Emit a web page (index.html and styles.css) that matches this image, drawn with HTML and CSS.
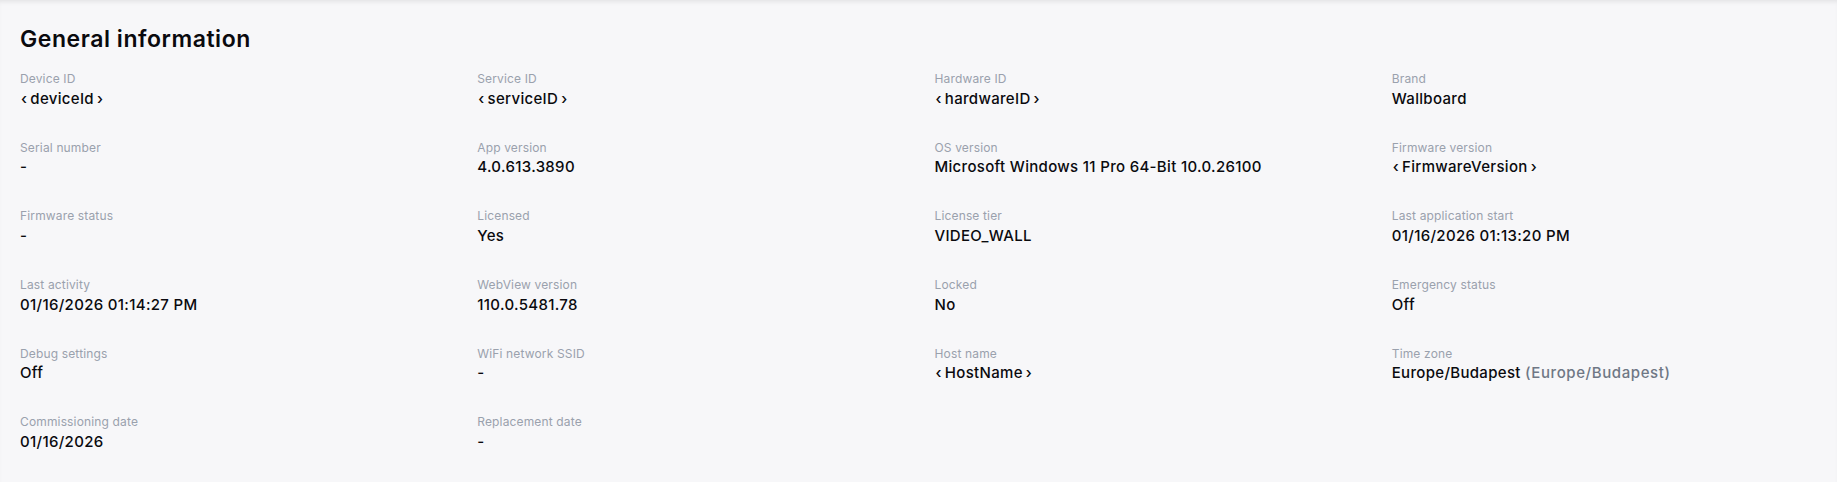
FILE: index.html
```html
<!DOCTYPE html>
<html lang="en">
<head>
<meta charset="utf-8">
<title>General information</title>
<link rel="stylesheet" href="styles.css">
</head>
<body>
<main class="page">
  <section class="section">
    <h2 class="section-title">General information</h2>
    <div class="info-grid">
      <div class="field"><div class="label">Device ID</div><div class="value"><span class="chev">&lsaquo;</span>deviceId<span class="chev">&rsaquo;</span></div></div>
      <div class="field"><div class="label">Service ID</div><div class="value"><span class="chev">&lsaquo;</span>serviceID<span class="chev">&rsaquo;</span></div></div>
      <div class="field"><div class="label">Hardware ID</div><div class="value"><span class="chev">&lsaquo;</span>hardwareID<span class="chev">&rsaquo;</span></div></div>
      <div class="field"><div class="label">Brand</div><div class="value">Wallboard</div></div>

      <div class="field"><div class="label">Serial number</div><div class="value">-</div></div>
      <div class="field"><div class="label">App version</div><div class="value">4.0.613.3890</div></div>
      <div class="field"><div class="label">OS version</div><div class="value">Microsoft Windows 11 Pro 64-Bit 10.0.26100</div></div>
      <div class="field"><div class="label">Firmware version</div><div class="value"><span class="chev">&lsaquo;</span>FirmwareVersion<span class="chev">&rsaquo;</span></div></div>

      <div class="field"><div class="label">Firmware status</div><div class="value">-</div></div>
      <div class="field"><div class="label">Licensed</div><div class="value">Yes</div></div>
      <div class="field"><div class="label">License tier</div><div class="value">VIDEO_WALL</div></div>
      <div class="field"><div class="label">Last application start</div><div class="value">01/16/2026 01:13:20 PM</div></div>

      <div class="field"><div class="label">Last activity</div><div class="value">01/16/2026 01:14:27 PM</div></div>
      <div class="field"><div class="label">WebView version</div><div class="value">110.0.5481.78</div></div>
      <div class="field"><div class="label">Locked</div><div class="value">No</div></div>
      <div class="field"><div class="label">Emergency status</div><div class="value">Off</div></div>

      <div class="field"><div class="label">Debug settings</div><div class="value">Off</div></div>
      <div class="field"><div class="label">WiFi network SSID</div><div class="value">-</div></div>
      <div class="field"><div class="label">Host name</div><div class="value"><span class="chev">&lsaquo;</span>HostName<span class="chev">&rsaquo;</span></div></div>
      <div class="field"><div class="label">Time zone</div><div class="value">Europe/Budapest <span class="muted">(Europe/Budapest)</span></div></div>

      <div class="field"><div class="label">Commissioning date</div><div class="value">01/16/2026</div></div>
      <div class="field"><div class="label">Replacement date</div><div class="value">-</div></div>
    </div>
  </section>
</main>
</body>
</html>
```

FILE: styles.css
```css
html, body {
  margin: 0;
  padding: 0;
}

body {
  background: #f7f7f9;
  font-family: Inter, "Noto Sans", "Liberation Sans", sans-serif;
  color: #0b0b0f;
  width: 1837px;
  height: 482px;
  overflow: hidden;
}

.page {
  height: 100%;
  box-shadow: inset 0 4px 4px -2px rgba(0, 0, 0, 0.08);
}

.section {
  padding: 25px 20px 0 20px;
}

.section-title {
  margin: 0 0 18px 0;
  font-size: 23px;
  line-height: 28px;
  font-weight: 600;
  letter-spacing: 0.55px;
  color: #0a0a0e;
}

.info-grid {
  display: grid;
  grid-template-columns: repeat(4, 1fr);
  column-gap: 32px;
  row-gap: 31.2px;
}

.field {
  display: flex;
  flex-direction: column;
  min-width: 0;
}

.label {
  font-size: 12px;
  line-height: 16px;
  margin-bottom: 1.5px;
  letter-spacing: 0.15px;
  color: #9aa1ad;
}

.value {
  font-size: 15px;
  line-height: 20px;
  font-weight: 500;
  letter-spacing: 0.32px;
  color: #0a0a0e;
  white-space: nowrap;
}

.chev {
  display: inline-block;
  margin: 0 3px 0 1px;
}

.value .chev:last-child {
  margin: 0 1px 0 3px;
}

.muted {
  color: #6f7785;
  letter-spacing: 0.6px;
}
```
